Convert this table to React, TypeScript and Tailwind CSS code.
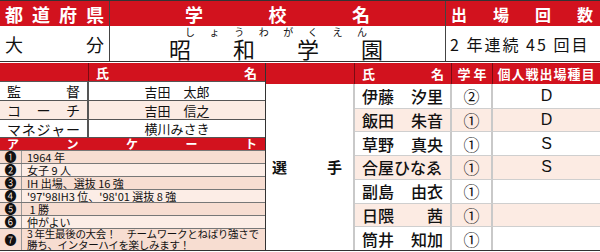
import React from "react";

const players = [
  { f: "伊藤", g: "汐里", y: "②", e: "D" },
  { f: "飯田", g: "朱音", y: "①", e: "D" },
  { f: "草野", g: "真央", y: "①", e: "S" },
  { f: "合屋ひなゑ", g: "", y: "①", e: "S" },
  { f: "副島", g: "由衣", y: "①", e: "" },
  { f: "日隈", g: "茜", y: "①", e: "" },
  { f: "筒井", g: "知加", y: "①", e: "" },
];

const survey = [
  ["❶", "1964 年"],
  ["❷", "女子 9 人"],
  ["❸", "IH 出場、選抜 16 強"],
  ["❹", "'97'98IH3 位、'98'01 選抜 8 強"],
  ["❺", "\u00a01 勝"],
  ["❻", "仲がよい"],
];

const staff = [
  { role: ["監", "督"], name: "吉田　太郎", bg: "bg-white" },
  { role: ["コ", "ー", "チ"], name: "吉田　信之", bg: "bg-[#fbebe3]" },
  { role: ["マ", "ネ", "ジ", "ャ", "ー"], name: "横川みさき", bg: "bg-white" },
];

export default function App() {
  return (
    <div className="w-[600px] h-[252px] bg-white overflow-hidden text-[#111] [font-family:'Noto_Sans_CJK_JP',sans-serif]">
      {/* top section */}
      <div className="border-t border-[#333]">
        <div className="h-[25px] flex bg-[#d2121e] text-white font-bold leading-none">
          <div className="w-[110px] border-r border-[#444] flex items-center justify-between px-[5px] text-[18px]">
            <span>都</span>
            <span>道</span>
            <span>府</span>
            <span>県</span>
          </div>
          <div className="w-[336px] border-r border-[#444] flex items-center justify-between px-[75px] text-[18px]">
            <span>学</span>
            <span>校</span>
            <span>名</span>
          </div>
          <div className="flex-1 flex items-center justify-between pl-[5px] pr-[7px] text-[16px]">
            <span>出</span>
            <span>場</span>
            <span>回</span>
            <span>数</span>
          </div>
        </div>
        <div className="h-[36px] flex border-b border-[#333] leading-none">
          <div className="w-[110px] border-r border-[#444] flex items-center justify-between px-[5px] pt-[1px] text-[18px]">
            <span>大</span>
            <span>分</span>
          </div>
          <div className="w-[336px] border-r border-[#444] flex flex-col">
            <div className="h-[11px] flex items-end justify-between pl-[75px] pr-[78px] text-[10px] leading-[10px]">
              {["し", "ょ", "う", "わ", "が", "く", "え", "ん"].map((c, i) => (
                <span key={i}>{c}</span>
              ))}
            </div>
            <div className="h-[22px] flex justify-between pl-[59px] pr-[62px] text-[22px] leading-[22px]">
              <span>昭</span>
              <span>和</span>
              <span>学</span>
              <span>園</span>
            </div>
          </div>
          <div className="flex-1 flex items-center pl-[4px] pt-[1px] text-[16px] tracking-[2px] whitespace-nowrap">
            2 年連続 45 回目
          </div>
        </div>
      </div>

      {/* bottom section */}
      <div className="mt-[1px] h-[188px] flex border-b border-[#333]">
        {/* left table */}
        <div className="w-[266px] border-r border-[#333] flex flex-col">
          <div className="h-[18px] flex bg-[#d2121e] text-white font-bold text-[13px] leading-none">
            <div className="w-[89px] border-r border-[#7a0b12]" />
            <div className="flex-1 flex items-center justify-between pl-[7px] pr-[8px]">
              <span>氏</span>
              <span>名</span>
            </div>
          </div>
          {staff.map((s, i) => (
            <div
              key={i}
              className={`${i === 2 ? "h-[18px]" : "h-[19px]"} flex border-t border-[#555] leading-none ${s.bg}`}
            >
              <div className="w-[89px] border-r-2 border-[#555] flex items-center justify-between px-[7px] text-[14px]">
                {s.role.map((c, j) => (
                  <span key={j}>{c}</span>
                ))}
              </div>
              <div className="flex-1 flex items-center justify-center text-[13px]">{s.name}</div>
            </div>
          ))}
          <div className="h-[13px] flex items-center justify-between border-t border-[#555] bg-[#d2121e] text-white font-bold text-[12px] leading-none pl-[7px] pr-[8px]">
            <span>ア</span>
            <span>ン</span>
            <span>ケ</span>
            <span>ー</span>
            <span>ト</span>
          </div>
          {survey.map((s, i) => (
            <div
              key={i}
              className={`h-[13px] flex border-t border-[#777] leading-none ${i % 2 === 0 ? "bg-[#f7ddd1]" : "bg-[#fcede6]"}`}
            >
              <div className="w-[22px] border-r border-[#999] flex items-center justify-center text-[12px]">{s[0]}</div>
              <div className="flex-1 flex items-center pl-[5px] text-[11px] whitespace-nowrap">{s[1]}</div>
            </div>
          ))}
          <div className="h-[22px] flex border-t border-[#777] leading-none bg-[#f7ddd1]">
            <div className="w-[22px] border-r border-[#999] flex items-center justify-center text-[12px]">❼</div>
            <div className="flex-1 flex flex-col justify-center pl-[5px] text-[10.5px] leading-[10.5px] tracking-[-0.3px] whitespace-nowrap">
              <span>3 年生最後の大会！　チームワークとねばり強さで</span>
              <span>勝ち、インターハイを楽しみます！</span>
            </div>
          </div>
        </div>

        {/* right table */}
        <div className="flex-1 flex flex-col">
          <div className="h-[21px] grid grid-cols-[89px_97px_41px_1fr] bg-[#d2121e] text-white font-bold text-[13px] leading-none">
            <div className="border-r border-[#7a0b12]" />
            <div className="border-r border-[#7a0b12] flex items-center justify-between pl-[7px] pr-[7px]">
              <span>氏</span>
              <span>名</span>
            </div>
            <div className="border-r border-[#7a0b12] flex items-center justify-center gap-[3px]">
              <span>学</span>
              <span>年</span>
            </div>
            <div className="flex items-center justify-center tracking-[1px]">個人戦出場種目</div>
          </div>
          <div className="flex-1 grid grid-cols-[89px_97px_41px_1fr] grid-rows-[repeat(7,1fr)] leading-none">
            <div className="row-span-7 border-r-2 border-[#c9c9c9] bg-white flex items-center justify-between pl-[6px] pr-[11px] text-[15px] font-bold">
              <span>選</span>
              <span>手</span>
            </div>
            {players.map((p, i) => {
              const bg = i % 2 === 1 ? "bg-[#fcebe3]" : "bg-white";
              const bt = i === 0 ? "" : "border-t border-[#cfcfcf]";
              return (
                <React.Fragment key={i}>
                  <div className={`${bg} ${bt} border-r-2 border-r-[#c9c9c9] flex items-center justify-between px-[7px] text-[16px] font-medium`}>
                    <span>{p.f}</span>
                    {p.g && <span>{p.g}</span>}
                  </div>
                  <div className={`${bg} ${bt} border-r-2 border-r-[#c9c9c9] flex items-center justify-center text-[16px]`}>
                    {p.y}
                  </div>
                  <div className={`${bg} ${bt} flex items-center justify-center text-[16px] [font-family:'Liberation_Sans',sans-serif]`}>
                    {p.e}
                  </div>
                </React.Fragment>
              );
            })}
          </div>
        </div>
      </div>
    </div>
  );
}
